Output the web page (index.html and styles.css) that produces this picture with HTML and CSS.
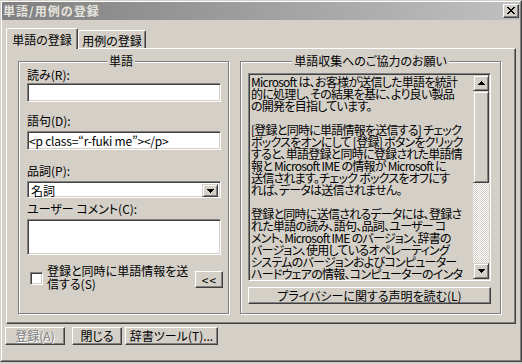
FILE: index.html
```html
<!DOCTYPE html>
<html lang="ja">
<head>
<meta charset="utf-8">
<title>単語/用例の登録</title>
<link rel="stylesheet" href="styles.css">
</head>
<body>
<div class="window">
  <div class="frame">
    <div class="titlebar">
      <span class="title">単語/用例の登録</span>
      <span class="close">
        <svg class="px" width="8" height="7" viewBox="0 0 8 7"><path d="M0 0h2v1H0zM6 0h2v1H6zM1 1h2v1H1zM5 1h2v1H5zM2 2h4v1H2zM3 3h2v1H3zM2 4h4v1H2zM1 5h2v1H1zM5 5h2v1H5zM0 6h2v1H0zM6 6h2v1H6z" fill="#000"/></svg>
      </span>
    </div>

    <div class="tabs">
      <div class="tab tab-active">単語の登録</div>
      <div class="tab">用例の登録</div>
    </div>

    <div class="panel">
      <div class="group group-word">
        <div class="group-title"><span>単語</span></div>
        <div class="lbl l1">読み(R):</div>
        <div class="edit e1"></div>
        <div class="lbl l2">語句(D):</div>
        <div class="edit e2">&lt;p class=“r-fuki me”&gt;&lt;/p&gt;</div>
        <div class="lbl l3">品詞(P):</div>
        <div class="combo">
          <span class="combo-text">名詞</span>
          <span class="combo-btn">
            <svg class="px" width="7" height="4" viewBox="0 0 7 4"><path d="M0 0h7v1H0zM1 1h5v1H1zM2 2h3v1H2zM3 3h1v1H3z" fill="#000"/></svg>
          </span>
        </div>
        <div class="lbl l4">ユーザー コメント(C):</div>
        <div class="edit memo"></div>
        <div class="send-row">
          <span class="check"></span>
          <span class="check-text">登録と同時に単語情報を送<br>信する(S)</span>
          <span class="btn btn-back">&lt;&lt;</span>
        </div>
      </div>

      <div class="group group-info">
        <div class="group-title"><span>単語収集へのご協力のお願い</span></div>
        <div class="info">
          <div class="info-text">Microsoft は、お客様が送信した単語を統計<br>的に処理し、その結果を基に、より良い製品<br>の開発を目指しています。<br><br>[登録と同時に単語情報を送信する] チェック<br>ボックスをオンにして [登録] ボタンをクリック<br>すると、単語登録と同時に登録された単語情<br>報と Microsoft IME の情報が Microsoft に<br>送信されます。チェック ボックスをオフにす<br>れば、データは送信されません。<br><br>登録と同時に送信されるデータには、登録さ<br>れた単語の読み、語句、品詞、ユーザー コ<br>メント、Microsoft IME のバージョン、辞書の<br>バージョン、使用しているオペレーティング<br>システムのバージョンおよびコンピューター<br>ハードウェアの情報、コンピューターのインタ</div>
          <div class="scrollbar">
            <span class="sb-btn">
              <svg class="px" width="7" height="4" viewBox="0 0 7 4"><path d="M3 0h1v1H3zM2 1h3v1H2zM1 2h5v1H1zM0 3h7v1H0z" fill="#000"/></svg>
            </span>
            <span class="sb-thumb"></span>
            <span class="sb-track"></span>
            <span class="sb-btn">
              <svg class="px" width="7" height="4" viewBox="0 0 7 4"><path d="M0 0h7v1H0zM1 1h5v1H1zM2 2h3v1H2zM3 3h1v1H3z" fill="#000"/></svg>
            </span>
          </div>
        </div>
        <div class="btn btn-privacy">プライバシーに関する声明を読む(L)</div>
      </div>
    </div>

    <div class="buttons">
      <div class="btn btn-reg disabled">登録(A)</div>
      <div class="btn btn-close">閉じる</div>
      <div class="btn btn-tool">辞書ツール(T)...</div>
    </div>
  </div>
</div>
</body>
</html>
```

FILE: styles.css
```css
* {
  box-sizing: border-box;
}

html,
body {
  margin: 0;
  padding: 0;
}

body {
  width: 522px;
  height: 364px;
  overflow: hidden;
  background: #d4d0c8;
  font-family: "Noto Sans CJK JP", "Noto Sans", sans-serif;
  font-size: 12px;
  line-height: 14px;
  color: #000;
  font-feature-settings: "palt";
}

.px {
  display: block;
  shape-rendering: crispEdges;
}

/* window frame */
.window {
  width: 522px;
  height: 362px;
  border: 1px solid;
  border-color: #d4d0c8 #404040 #404040 #d4d0c8;
}

.frame {
  height: 100%;
  border: 1px solid;
  border-color: #fff #808080 #808080 #fff;
  display: flex;
  flex-direction: column;
}

.titlebar {
  height: 18px;
  flex: none;
  background: linear-gradient(to right, #808080, #c0c0c0);
  display: flex;
  align-items: center;
  justify-content: space-between;
  padding: 0 1px 0 1px;
}

.title {
  color: #e6e4de;
  font-weight: bold;
  font-feature-settings: normal;
  letter-spacing: 1px;
  line-height: 14px;
}

.close {
  width: 16px;
  height: 14px;
  background: #d4d0c8;
  border: 1px solid;
  border-color: #fff #404040 #404040 #fff;
  box-shadow: inset -1px -1px #808080;
  display: flex;
  align-items: center;
  justify-content: center;
  padding: 0 1px 1px 0;
}

/* tabs */
.tabs {
  flex: none;
  display: flex;
  align-items: flex-end;
  margin-top: 8px;
  padding-left: 4px;
  height: 20px;
}

.tab {
  height: 18px;
  width: 68px;
  background: #d4d0c8;
  border-top: 1px solid #fff;
  border-left: 1px solid #fff;
  border-right: 1px solid #404040;
  box-shadow: inset -1px 0 #808080;
  border-radius: 2px 2px 0 0;
  display: flex;
  justify-content: center;
  padding-top: 3px;
}

.tab-active {
  position: relative;
  z-index: 1;
  width: 72px;
  height: 21px;
  margin-bottom: -1px;
  padding-top: 4px;
}

/* tab panel */
.panel {
  flex: none;
  margin-left: 4px;
  width: 510px;
  height: 276px;
  border: 1px solid;
  border-color: #fff #404040 #404040 #fff;
  box-shadow: inset -1px -1px #808080;
  padding: 12px 0 0 11px;
  display: flex;
  align-items: flex-start;
}

/* group boxes */
.group {
  position: relative;
  height: 253px;
  border: 1px solid #808080;
  box-shadow: inset 1px 1px #fff, 1px 1px #fff;
  display: flex;
  flex-direction: column;
}

.group-title {
  position: absolute;
  top: -8px;
  left: 0;
  right: 0;
  display: flex;
  justify-content: center;
}

.group-title span {
  background: #d4d0c8;
  padding: 0 2px;
  line-height: 14px;
}

.group-word {
  width: 211px;
  padding: 0 7px 0 8px;
}

.group-word .group-title {
  padding-right: 5px;
}

.group-info {
  width: 261px;
  margin-left: 11px;
  padding: 11px 9px 0 7px;
}

/* fields */
.lbl {
  height: 14px;
  white-space: nowrap;
}

.l1 { margin-top: 6px; }
.l2 { margin-top: 12px; }
.l3 { margin-top: 14px; }
.l4 { margin-top: 4px; }

.edit {
  background: #fff;
  border: 1px solid;
  border-color: #808080 #fff #fff #808080;
  box-shadow: inset 1px 1px #404040, inset -1px -1px #d4d0c8;
  white-space: nowrap;
  overflow: hidden;
}

.e1 {
  height: 19px;
  margin-top: 1px;
}

.e2 {
  height: 19px;
  margin-top: 3px;
  padding: 2px 0 0 1px;
  line-height: 14px;
  letter-spacing: -0.2px;
}

.memo {
  height: 36px;
  margin-top: 3px;
}

.combo {
  height: 17px;
  margin-top: 3px;
  background: #fff;
  border: 1px solid;
  border-color: #808080 #fff #fff #808080;
  box-shadow: inset 1px 1px #404040, inset -1px -1px #d4d0c8;
  display: flex;
  padding: 2px;
}

.combo-text {
  flex: 1;
  line-height: 13px;
  padding-left: 1px;
}

.combo-btn {
  width: 16px;
  height: 13px;
  background: #d4d0c8;
  border: 1px solid;
  border-color: #d4d0c8 #404040 #404040 #d4d0c8;
  box-shadow: inset 1px 1px #fff, inset -1px -1px #808080;
  display: flex;
  align-items: center;
  justify-content: center;
}

.send-row {
  margin-top: 9px;
  margin-right: -2px;
  display: flex;
  align-items: flex-start;
}

.check {
  flex: none;
  width: 13px;
  height: 13px;
  margin: 8px 0 0 3px;
  background: #fff;
  border: 1px solid;
  border-color: #808080 #fff #fff #808080;
  box-shadow: inset 1px 1px #404040, inset -1px -1px #d4d0c8;
}

.check-text {
  margin-left: 4px;
  line-height: 13px;
  white-space: nowrap;
}

/* buttons */
.btn {
  display: flex;
  align-items: center;
  justify-content: center;
  background: #d4d0c8;
  border: 1px solid;
  border-color: #fff #404040 #404040 #fff;
  box-shadow: inset -1px -1px #808080;
  white-space: nowrap;
  line-height: 14px;
}

.btn-back {
  flex: none;
  width: 28px;
  height: 17px;
  margin: 7px 0 0 auto;
  font-feature-settings: normal;
  letter-spacing: 1px;
  padding-left: 1px;
}

.btn-privacy {
  width: 243px;
  height: 17px;
  margin-top: 6px;
}

.buttons {
  flex: none;
  display: flex;
  margin: 3px 0 0 3px;
}

.buttons .btn {
  height: 18px;
}

.btn-reg { width: 60px; }
.btn-close { width: 50px; margin-left: 7px; }
.btn-tool { width: 93px; margin-left: 3px; }

.disabled {
  color: #808080;
  text-shadow: 1px 1px #fff;
}

/* read-only info text with scrollbar */
.info {
  width: 243px;
  height: 208px;
  background: #d4d0c8;
  border: 1px solid;
  border-color: #808080 #fff #fff #808080;
  box-shadow: inset 1px 1px #404040, inset -1px -1px #d4d0c8;
  padding: 1px;
  display: flex;
}

.info-text {
  flex: 1;
  min-width: 0;
  white-space: nowrap;
  line-height: 12px;
  letter-spacing: -0.75px;
  padding: 1px 0 0 1px;
}

.scrollbar {
  flex: none;
  width: 16px;
  display: flex;
  flex-direction: column;
}

.sb-btn,
.sb-thumb {
  flex: none;
  background: #d4d0c8;
  border: 1px solid;
  border-color: #d4d0c8 #404040 #404040 #d4d0c8;
  box-shadow: inset 1px 1px #fff, inset -1px -1px #808080;
}

.sb-btn {
  height: 16px;
  display: flex;
  align-items: center;
  justify-content: center;
}

.sb-thumb {
  height: 92px;
}

.sb-track {
  flex: 1;
  background: repeating-conic-gradient(#fff 0 25%, #d4d0c8 0 50%) 0 0 / 2px 2px;
}
```
